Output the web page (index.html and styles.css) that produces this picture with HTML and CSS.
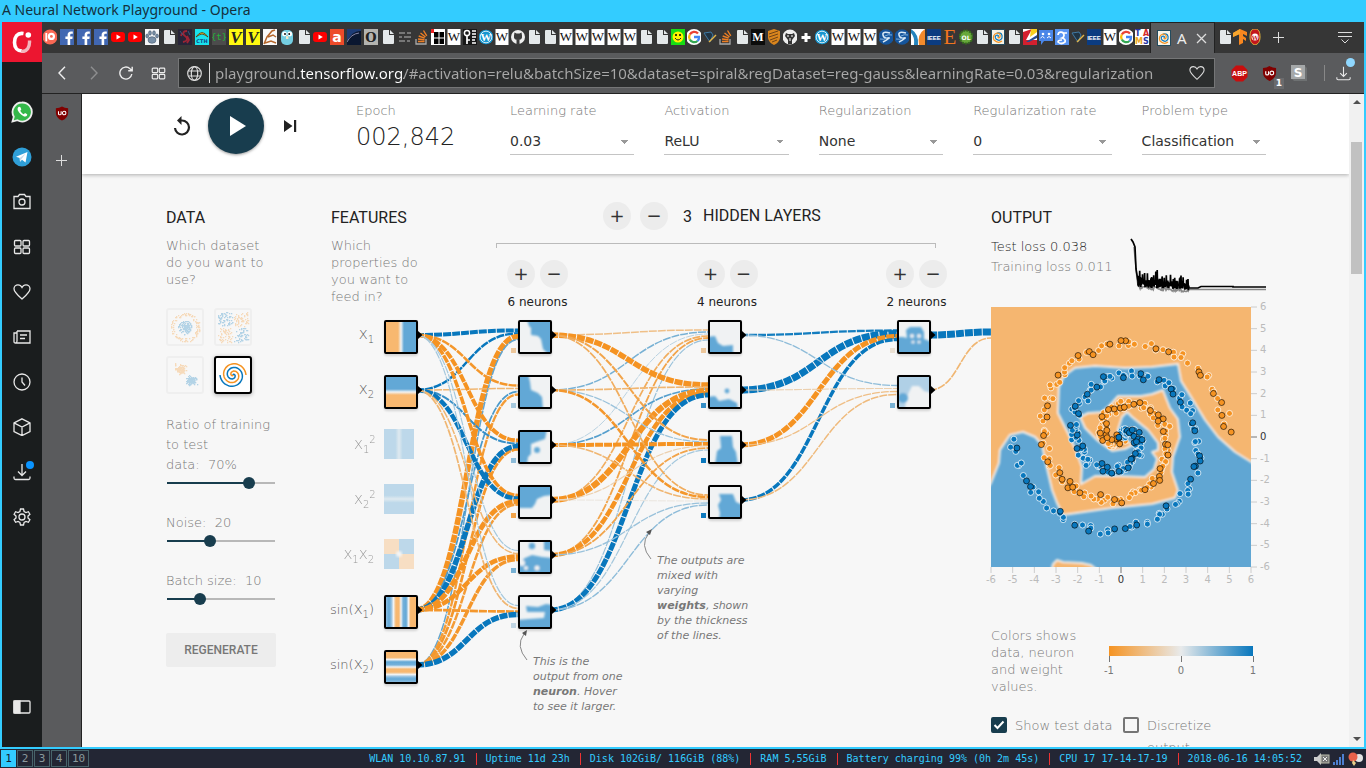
FILE: index.html
```html
<!DOCTYPE html>
<html lang="en">
<head>
<meta charset="utf-8">
<title>A Neural Network Playground</title>
<link rel="stylesheet" href="styles.css">
</head>
<body>
<svg class="defs" aria-hidden="true">
  <defs>
    <symbol id="f-patreon" viewBox="0 0 14 16"><circle cx="7" cy="8" r="7.4" fill="#f96854"/><circle cx="8.4" cy="7.4" r="3.6" fill="#fff"/><circle cx="8.4" cy="7.4" r="1.4" fill="#f96854"/><rect x="2.4" y="4" width="1.8" height="8.4" fill="#fff"/></symbol>
    <symbol id="f-fb" viewBox="0 0 14 16"><rect width="14" height="16" fill="#4167b2"/><path d="M7.6 16V10H5.4V7.6h2.2V6c0-2.2 1.3-3.4 3.4-3.4h1.8v2.2h-1.2c-1 0-1.4.5-1.4 1.4v1.4h2.5L12.400 10h-2.200v6z" fill="#fff"/></symbol>
    <symbol id="f-yt" viewBox="0 0 14 16"><rect y="3" width="14" height="10" rx="3" fill="#f00"/><path d="M5.500 5.600v5L9.800 8z" fill="#fff"/></symbol>
    <symbol id="f-paw" viewBox="0 0 14 16"><rect width="14" height="16" fill="#f4f6f8"/><g fill="#7890a8" stroke="#44586c" stroke-width=".6"><ellipse cx="7" cy="11" rx="4" ry="3.300"/><ellipse cx="2.200" cy="7" rx="1.400" ry="2"/><ellipse cx="5" cy="4" rx="1.400" ry="2.200"/><ellipse cx="9" cy="4" rx="1.400" ry="2.200"/><ellipse cx="12" cy="7" rx="1.400" ry="2"/></g></symbol>
    <symbol id="f-page" viewBox="0 0 14 16"><path d="M3 1h5v5h5v8a1 1 0 0 1-1 1H3a1 1 0 0 1-1-1V2a1 1 0 0 1 1-1z" fill="#e4e8ea"/><path d="M9 1l4 4H9z" fill="#e4e8ea"/></symbol>
    <symbol id="f-snake" viewBox="0 0 14 16"><rect width="14" height="16" fill="#282438"/><path d="M9 2C5 2 4 5 7 7s3 5-2 6M9 7l2 4-2 3M4 4l-1 3" fill="none" stroke="#9c2435" stroke-width="1.800"/><path d="M2 2l3 4M10 2l2 4" stroke="#345b80"/></symbol>
    <symbol id="f-cth" viewBox="0 0 14 16"><rect width="14" height="16" fill="#19e3ee"/><path d="M1 8q6-9 12 0l-3-2-3-1-3 1z" fill="#f4c62c" stroke="#473a14" stroke-width=".8"/><text x="7" y="14" text-anchor="middle" font-family="DejaVu Sans" font-weight="bold" font-size="5" fill="#148">CTH</text></symbol>
    <symbol id="f-t" viewBox="0 0 14 16"><rect width="14" height="16" fill="#4c4c4c"/><text x="7" y="11" text-anchor="middle" font-family="DejaVu Sans Mono" font-size="9" fill="#22b33a">{t}</text></symbol>
    <symbol id="f-v" viewBox="0 0 14 16"><rect width="14" height="16" fill="#fff811"/><text x="7" y="14" text-anchor="middle" font-family="Liberation Serif" font-style="italic" font-weight="bold" font-size="17" fill="#222">V</text></symbol>
    <symbol id="f-swirl" viewBox="0 0 14 16"><rect width="14" height="16" fill="#fafafa"/><path d="M1 15l3-7 5-6 3-1M5 8l5-2 3 2M2 14l6-2 5 2" fill="none" stroke="#b5672c" stroke-width="1.500"/></symbol>
    <symbol id="f-gopher" viewBox="0 0 14 16"><rect x="1" y="1" width="12" height="15" rx="5" fill="#74cee2"/><circle cx="4.400" cy="5" r="2.400" fill="#fff"/><circle cx="9.800" cy="5" r="2.400" fill="#fff"/><circle cx="5" cy="5" r=".9"/><circle cx="9.200" cy="5" r=".9"/><rect x="6" y="7" width="2.400" height="3" fill="#f5e8c8"/></symbol>
    <symbol id="f-a" viewBox="0 0 14 16"><rect width="14" height="16" fill="#ed4b2a"/><text x="7" y="12.500" text-anchor="middle" font-family="DejaVu Sans" font-weight="bold" font-size="14" fill="#fff">a</text></symbol>
    <symbol id="f-night" viewBox="0 0 14 16"><rect width="14" height="16" fill="#0a1730"/><path d="M0 12Q6 1 14 2V0H0z" fill="#1d3c76"/><path d="M0 13q4-8 12-9" fill="none" stroke="#88a" /></symbol>
    <symbol id="f-o" viewBox="0 0 14 16"><rect width="14" height="16" fill="#b4b4b0"/><text x="7" y="13" text-anchor="middle" font-family="DejaVu Serif" font-weight="bold" font-size="13" fill="#222">O</text></symbol>
    <symbol id="f-dash" viewBox="0 0 14 16"><path d="M1 4h6m2 0h4M1 8h3m2 0h7M1 12h6m2 0h3" stroke="#777" stroke-width="2"/></symbol>
    <symbol id="f-so" viewBox="0 0 14 16"><path d="M1 10v5h10v-5" fill="none" stroke="#aaa" stroke-width="1.300"/><path d="M3 12.500h6.500M3 10l6.500.8M3.700 7l6 2.200M5.500 4l5 4M8.500 1.500l3.300 5.300" stroke="#ef7f24" stroke-width="1.400"/></symbol>
    <symbol id="f-grid" viewBox="0 0 14 16"><rect width="14" height="16" fill="#fff"/><rect x="3" y="3" width="10" height="12"/><path d="M8 3v12M3 9h10" stroke="#fff"/><rect width="3" height="4" fill="#e22"/></symbol>
    <symbol id="f-w" viewBox="0 0 14 16"><rect x=".500" width="13" height="16" fill="#fff"/><text x="7" y="12" text-anchor="middle" font-family="Liberation Serif" font-size="13" fill="#111">W</text></symbol>
    <symbol id="f-qr" viewBox="0 0 14 16"><rect width="14" height="16" fill="#171717"/><circle cx="4" cy="4" r="2.600" fill="none" stroke="#fff" stroke-width="1.500"/><path d="M4 7v8M4 11h3M9 2h4M9 5h4M9 8h4M9 11h3M9 14h4" stroke="#fff" stroke-width="1.700"/></symbol>
    <symbol id="f-wp" viewBox="0 0 14 16"><circle cx="7" cy="8" r="7.300" fill="#1795cf"/><circle cx="7" cy="8" r="5.800" fill="none" stroke="#fff" stroke-width=".8"/><text x="7" y="12" text-anchor="middle" font-family="Liberation Serif" font-weight="bold" font-size="11" fill="#fff">W</text></symbol>
    <symbol id="f-gh" viewBox="0 0 14 16"><circle cx="7" cy="8" r="7" fill="#eee"/><path d="M3.500 3.500l2 1h3l2-1 .5 3c.5 3-1 4.500-4 4.500s-4.500-1.500-4-4.500zM5.500 11h3v5h-3z" fill="#3a3a3a"/></symbol>
    <symbol id="f-smile" viewBox="0 0 14 16"><rect width="14" height="16" fill="#17dc14"/><circle cx="7" cy="8" r="5.500" fill="#fff200"/><circle cx="5" cy="6" r="1"/><circle cx="9" cy="6" r="1"/><path d="M4 9q3 4 6 0" fill="none" stroke="#222"/></symbol>
    <symbol id="f-g" viewBox="0 0 14 16"><circle cx="7" cy="8" r="8" fill="#fff"/><g fill="none" stroke-width="2.300"><path d="M11 4.500A5 5 0 0 0 2.800 5.500" stroke="#ea4335"/><path d="M2.800 5.500a5 5 0 0 0 0 5" stroke="#fbbc05"/><path d="M2.800 10.500A5 5 0 0 0 10.500 12" stroke="#34a853"/><path d="M10.500 12a5 5 0 0 0 1.500-4H7" stroke="#4285f4"/></g></symbol>
    <symbol id="f-pen" viewBox="0 0 14 16"><path d="M1 4l7-1 2 3-3 7z" fill="#203444" stroke="#3f79a4"/><path d="M6 13l7-7" stroke="#e1b54b" stroke-width="1.500"/></symbol>
    <symbol id="f-m" viewBox="0 0 14 16"><rect width="14" height="16" fill="#0b0b0b"/><text x="7" y="12" text-anchor="middle" font-family="Liberation Serif" font-weight="bold" font-size="12" fill="#fff">M</text></symbol>
    <symbol id="f-shield" viewBox="0 0 14 16"><path d="M7 0l6 2v7q-1 5-6 7-5-2-6-7V2z" fill="#d9851d"/><path d="M2 5l9-3M2 8l9-3M3 11l8-3M5 13l5-2" stroke="#704316"/></symbol>
    <symbol id="f-cat" viewBox="0 0 14 16"><circle cx="7" cy="8" r="7.500" fill="#eee"/><path d="M3 4l2 1h4l2-1 1 3-3 4v4H5v-4L2 7z" fill="#333"/><path d="M4 7h2M8 7h2M7 9v3" stroke="#fff"/></symbol>
    <symbol id="f-plus" viewBox="0 0 14 16"><path d="M7 4v9M2.500 8.500h9" stroke="#fff" stroke-width="3"/></symbol>
    <symbol id="f-s" viewBox="0 0 14 16"><circle cx="7" cy="8" r="7.800" fill="#15559c"/><path d="M11 4Q3 2 4 6t5 3-5 4" fill="none" stroke="#d7e8f5" stroke-width="1.500"/><path d="M13 6q-4-1-7 1M1 10q4 1 7-1" fill="none" stroke="#7fb0dd"/></symbol>
    <symbol id="f-swoosh" viewBox="0 0 14 16"><rect width="14" height="16" fill="#fff"/><path d="M0 0q8 5 7 16H3Q4 8 0 4z" fill="#2484bd"/><path d="M14 0Q6 5 8 16h6z" fill="#f28a2c"/></symbol>
    <symbol id="f-ieee" viewBox="0 0 14 16"><rect width="14" height="16" fill="#0b3c82"/><text x="7" y="11" text-anchor="middle" font-family="Liberation Sans" font-weight="bold" font-size="6" fill="#fff">IEEE</text></symbol>
    <symbol id="f-e" viewBox="0 0 14 16"><text x="7" y="15" text-anchor="middle" font-family="Liberation Serif" font-size="21" fill="#f2741f">E</text></symbol>
    <symbol id="f-ol" viewBox="0 0 14 16"><circle cx="7" cy="8" r="6.500" fill="#67a83b" stroke="#366a1e" stroke-width="2" stroke-dasharray="2 1"/><text x="7" y="10.500" text-anchor="middle" font-family="DejaVu Sans" font-weight="bold" font-size="6" fill="#fff">OL</text></symbol>
    <symbol id="f-spiral" viewBox="0 0 14 16"><rect x=".5" y=".5" width="13" height="15" fill="#f7f3e8" stroke="#234b5e"/><path d="M7 8q1-2-1-2-3 1-1 4 4 3 6-1 1-6-5-5" fill="none" stroke="#0877bd" stroke-width="1.200"/><path d="M7 8q0 2 2 0 1-4-3-4-5 2-3 7 4 4 8 1" fill="none" stroke="#f59322" stroke-width="1.200"/></symbol>
    <symbol id="f-l" viewBox="0 0 14 16"><rect width="14" height="16" fill="#fff"/><path d="M0 3l9-3L3 11h11v5H0z" fill="#d3202f"/><path d="M8 0h6v3L7 8z" fill="#f8cf1c"/><path d="M3 13l11-7v3L6 13z" fill="#274b94"/></symbol>
    <symbol id="f-chat" viewBox="0 0 14 16"><path d="M0 1h14v11H5l-3 4v-4H0z" fill="#4a86e8"/><circle cx="4" cy="5" r="1.300" fill="#fff"/><circle cx="10" cy="5" r="1.300" fill="#fff"/><path d="M1.500 9q2-3 4 0M8 9q2-3 4 0" stroke="#fff" fill="none"/></symbol>
    <symbol id="f-scholar" viewBox="0 0 14 16"><rect width="14" height="16" fill="#5894f2"/><path d="M3 6a3 3 0 1 1 4 3q4 1 3 4-4 3-7 0 0-2 4-2M8 4h4" fill="none" stroke="#fff" stroke-width="1.700"/></symbol>
    <symbol id="f-tams" viewBox="0 0 14 16"><rect width="14" height="16" fill="#fff"/><g font-family="DejaVu Sans" font-weight="bold" font-size="8"><text x="0" y="7" fill="#2536a4">T</text><text x="8" y="7" fill="#d42828">A</text><text x="0" y="15" fill="#eda821">M</text><text x="8" y="15" fill="#2536a4">S</text></g></symbol>
    <symbol id="f-tf" viewBox="0 0 14 16"><path d="M7 0l7 3v4l-4-2v2l3 2v3l-3-2v4l-4 2V5L0 8V4z" fill="#f9871f"/><path d="M7 0v5L0 8V4z" fill="#f9a62d"/></symbol>
    <symbol id="f-wisc" viewBox="0 0 14 16"><path d="M7 0c4 0 5 3 5 8s-2 7-5 8c-3-1-5-3-5-8s1-8 5-8z" fill="#c4161c" stroke="#e0b53b"/><circle cx="7" cy="8" r="3.500" fill="#fff"/><text x="7" y="10.500" text-anchor="middle" font-family="DejaVu Serif" font-weight="bold" font-size="6" fill="#c4161c">W</text></symbol>
    <symbol id="i-heart" viewBox="0 0 18 18"><path d="M9 16C4 11.500 1 9 1 5.700A4 4 0 0 1 5 1.800c1.800 0 3.200 1 4 2.600.8-1.600 2.200-2.600 4-2.600a4 4 0 0 1 4 3.900C17 9 14 11.500 9 16z"/></symbol>
    <symbol id="i-grid" viewBox="0 0 18 18"><rect x="1.500" y="2.500" width="6.500" height="5.500" rx="1"/><rect x="10" y="2.500" width="6.500" height="5.500" rx="1"/><rect x="1.500" y="10" width="6.500" height="5.500" rx="1"/><rect x="10" y="10" width="6.500" height="5.500" rx="1"/></symbol>
    <symbol id="i-download" viewBox="0 0 18 18"><path d="M9 1v11M5 8.500l4 4 4-4M1 13.500V15q0 1.500 1.500 1.500h13Q17 16.500 17 15v-1.500"/></symbol>
    <symbol id="i-ub" viewBox="0 0 16 16"><path d="M8 0q3 2 7 2v5q0 6-7 9Q1 13 1 7V2q4 0 7-2z" fill="#800000"/><path d="M4 5.500v3q0 1 1.500 1T7 8.500v-3" fill="none" stroke="#fff" stroke-width="1.200"/><circle cx="10.500" cy="7.500" r="2" fill="none" stroke="#fff" stroke-width="1.200"/></symbol>
    <filter id="soft" x="-10%" y="-10%" width="120%" height="120%"><feGaussianBlur stdDeviation="0.9"/></filter>
    <filter id="soft2"><feGaussianBlur stdDeviation="1"/></filter>
  </defs>
</svg>

<header class="titlebar">A Neural Network Playground - Opera</header>

<div class="window">
  <nav class="sidebar" aria-label="Sidebar">
    <button class="opera" aria-label="Menu"><svg width="20" height="22" viewBox="0 0 20 22"><path d="M11.500 2.500C5 1.500 2.500 6 2.500 11.500S5.500 20 10 20" fill="none" stroke="#fff" stroke-width="3.600"/><path d="M9 20.500c6 .5 9-4 8.500-11" fill="none" stroke="#f3b6bd" stroke-width="3.400"/><circle cx="16.300" cy="4" r="2.800" fill="#fff"/></svg></button>
    <div class="side-items">
      <button class="side" aria-label="WhatsApp"><svg width="22" height="22" viewBox="0 0 22 22"><path d="M11 1.500a9.500 9.500 0 0 0-8.200 14.200L1.500 20.500l5-1.300A9.500 9.500 0 1 0 11 1.500z" fill="#34b84a" stroke="#eee" stroke-width="1.800"/><path d="M7.500 6c-2 1.500-.5 4.500 2 7s5.500 3.500 6.500 1.500c.6-1.200.3-1.500-2-2.500l-1.200 1.300c-1.500-.6-3-2-3.500-3.500L10.300 8.500C9.500 6 9 5.500 7.500 6z" fill="#fff"/></svg></button>
      <button class="side" aria-label="Telegram"><svg width="20" height="20" viewBox="0 0 20 20"><circle cx="10" cy="10" r="9.500" fill="#2f9fd8"/><path d="M4 9.700L15.500 5l-2 10.500-3.500-2.700-2 2-.3-3.800z" fill="#fff"/><path d="M7.700 11l6-4.500-4.400 5.700-1.300 2.600z" fill="#c8daea"/></svg></button>
      <button class="side" aria-label="Snapshot"><svg class="line" viewBox="0 0 18 18"><path d="M1 3.500h4l1.500-2h5l1.500 2h4v12H1z"/><circle cx="9" cy="9" r="3"/></svg></button>
      <button class="side" aria-label="Speed dial"><svg class="line"><use href="#i-grid"/></svg></button>
      <button class="side" aria-label="Bookmarks"><svg class="line"><use href="#i-heart"/></svg></button>
      <button class="side" aria-label="News"><svg class="line" viewBox="0 0 18 18"><path d="M4 3h13v12H2.500Q1 15 1 13.500V5h3M4 3v10q0 2-1.500 2M7 7h7M7 10.500h5"/></svg></button>
      <button class="side" aria-label="History"><svg class="line" viewBox="0 0 18 18"><circle cx="9" cy="9" r="8"/><path d="M9 4.500V9l3 3.500"/></svg></button>
      <button class="side" aria-label="Extensions"><svg class="line" viewBox="0 0 18 18"><path d="M9 .8l8 4v8.800l-8 4-8-4V4.800zM1 4.800l8 4.200 8-4.200M9 9v8.500"/></svg></button>
      <button class="side" aria-label="Downloads"><svg class="line"><use href="#i-download"/></svg><i class="dot"></i></button>
      <button class="side" aria-label="Settings"><svg class="line" viewBox="0 0 18 18"><circle cx="9" cy="9" r="3"/><path d="M7.500 1h3l.6 2.500 1.900 1 2.400-.8 1.500 2.600L15 8v2l1.900 1.700-1.500 2.600-2.400-.8-1.900 1-.6 2.500h-3l-.6-2.500-1.900-1-2.400.8-1.500-2.600L3 10V8L1.100 6.300l1.500-2.600 2.400.8 1.900-1z"/></svg></button>
    </div>
    <button class="side panel" aria-label="Toggle panel"><svg class="line" viewBox="0 0 18 18"><rect x="1" y="3" width="16" height="12" rx="1"/><rect x="1" y="3" width="6" height="12" fill="#e8e8e8"/></svg></button>
  </nav>

  <div class="browser">
    <div class="tabs">
      <div class="tab-group first" id="tabs-a"></div>
      <div class="tab-group second" id="tabs-b"></div>
      <div class="active"><svg width="16" height="16"><use href="#f-spiral"/></svg><span>A</span><button aria-label="Close tab"><svg width="11" height="11" viewBox="0 0 11 11"><path d="M1 1l9 9M10 1l-9 9" stroke="#ddd" stroke-width="1.300"/></svg></button></div>
      <div class="tab-group third" id="tabs-c"></div>
      <button class="newtab" aria-label="New tab"><svg width="11" height="11" viewBox="0 0 11 11"><path d="M5.500 0v11M0 5.500h11" stroke="#ddd"/></svg></button>
      <button class="tabmenu" aria-label="Tab menu"><svg width="14" height="13" viewBox="0 0 14 13"><path d="M0 1.500h14M0 5.500h14M3.500 8.500L7 12l3.500-3.500" stroke="#ddd" fill="none"/></svg></button>
    </div>
    <div class="toolbar">
      <button class="nav" aria-label="Back"><svg width="8" height="14" viewBox="0 0 8 14"><path d="M7 .8L1 7l6 6.200"/></svg></button>
      <button class="nav off" aria-label="Forward"><svg width="8" height="14" viewBox="0 0 8 14"><path d="M1 .8L7 7l-6 6.200"/></svg></button>
      <button class="nav" aria-label="Reload"><svg width="14" height="14" viewBox="0 0 14 14"><path d="M12.800 8A6 6 0 1 1 11 2.700L13 4.500M13.200.800v4H9.200"/></svg></button>
      <button class="nav" aria-label="Speed dial"><svg width="15" height="15"><use href="#i-grid"/></svg></button>
      <div class="address">
        <svg width="15" height="15" viewBox="0 0 15 15"><circle cx="7.500" cy="7.500" r="6.800"/><ellipse cx="7.500" cy="7.500" rx="3.200" ry="6.800"/><path d="M1.500 5h12M1.500 10h12"/></svg>
        <i class="caret"></i>
        <input type="text" aria-label="Address" value="playground.tensorflow.org/#activation=relu&amp;batchSize=10&amp;dataset=spiral&amp;regDataset=reg-gauss&amp;learningRate=0.03&amp;regularization">
        <svg width="16" height="16"><use href="#i-heart"/></svg>
      </div>
      <button class="ext" aria-label="Adblock Plus"><svg width="17" height="17" viewBox="0 0 17 17"><path d="M5 .5h7L16.500 5v7L12 16.500H5L.5 12V5z" fill="#c80e0e"/><text x="8.500" y="11" text-anchor="middle" font-family="Liberation Sans" font-weight="bold" font-size="7" fill="#fff">ABP</text></svg></button>
      <button class="ext" aria-label="uBlock Origin"><svg width="15" height="15"><use href="#i-ub"/></svg><b>1</b></button>
      <button class="ext" aria-label="Stylish"><svg width="16" height="16" viewBox="0 0 16 16"><path d="M14 1l2 2v13H3l-2-2z" fill="#6e7172"/><rect width="14" height="14" fill="#a5a8a9"/><text x="7" y="11.500" text-anchor="middle" font-family="DejaVu Sans" font-weight="bold" font-size="12" fill="#fff">S</text></svg></button>
      <i class="sep"></i>
      <button class="ext dl" aria-label="Downloads"><svg class="line" width="15" height="15"><use href="#i-download"/></svg><i class="dot"></i></button>
    </div>

    <div class="below">
      <aside class="rail">
        <button aria-label="uBlock Origin"><svg width="14" height="15"><use href="#i-ub"/></svg></button>
        <button aria-label="Add"><svg width="11" height="11" viewBox="0 0 11 11"><path d="M5.500 0v11M0 5.500h11" stroke="#ddd"/></svg></button>
      </aside>

      <div class="page">
        <div class="controls">
          <div class="controls-inner">
            <div class="timeline">
              <button class="flat" aria-label="Reset"><svg width="20" height="20" viewBox="0 0 20 20"><path d="M3 12a7 7 0 1 0 7-7.500H7.500" fill="none" stroke="#222" stroke-width="2.200"/><path d="M9.500 0v9L5 4.500z" fill="#222"/></svg></button>
              <button class="play" aria-label="Run"><svg width="18" height="22" viewBox="0 0 18 22"><path d="M1 1l16 10L1 21z" fill="#fff"/></svg></button>
              <button class="flat" aria-label="Step"><svg width="14" height="14" viewBox="0 0 14 14"><path d="M1 1l8.500 6L1 13zM11 1h2.200v12H11z" fill="#222"/></svg></button>
            </div>
            <div class="epoch"><span class="label">Epoch</span><output>002,842</output></div>
            <div class="control"><label class="label" for="lr">Learning rate</label><select id="lr"><option>0.03</option></select></div>
            <div class="control"><label class="label" for="act">Activation</label><select id="act"><option>ReLU</option></select></div>
            <div class="control"><label class="label" for="reg">Regularization</label><select id="reg"><option>None</option></select></div>
            <div class="control wide"><label class="label" for="regr">Regularization rate</label><select id="regr"><option>0</option></select></div>
            <div class="control"><label class="label" for="prob">Problem type</label><select id="prob"><option>Classification</option></select></div>
          </div>
        </div>

        <main class="main">
          <section class="data">
            <h2>Data</h2>
            <p class="light">Which dataset do you want to use?</p>
            <div class="datasets" id="datasets"></div>
            <div class="param"><label for="ratio">Ratio of training to test data:&nbsp;&nbsp;70%</label><input type="range" id="ratio" min="10" max="90" value="70" style="--fill:.75"></div>
            <div class="param"><label for="noise">Noise:&nbsp;&nbsp;20</label><input type="range" id="noise" min="0" max="50" value="20" style="--fill:.4"></div>
            <div class="param"><label for="batch">Batch size:&nbsp;&nbsp;10</label><input type="range" id="batch" min="1" max="30" value="10" style="--fill:.31"></div>
            <button class="regen">Regenerate</button>
          </section>

          <section class="network">
            <svg class="graph" id="graph" viewBox="0 0 660 520"></svg>
            <div class="features">
              <h2>Features</h2>
              <p class="light">Which properties do you want to feed in?</p>
            </div>
            <div class="layers">
              <div class="layers-head"><button class="round" aria-label="Add layer">+</button><button class="round" aria-label="Remove layer">−</button><span class="count">3</span><h2>Hidden layers</h2></div>
              <div class="bracket"></div>
              <div class="layer-row">
                <div class="layer"><div><button class="round" aria-label="Add neuron">+</button><button class="round" aria-label="Remove neuron">−</button></div><span>6 neurons</span></div>
                <div class="layer"><div><button class="round" aria-label="Add neuron">+</button><button class="round" aria-label="Remove neuron">−</button></div><span>4 neurons</span></div>
                <div class="layer"><div><button class="round" aria-label="Add neuron">+</button><button class="round" aria-label="Remove neuron">−</button></div><span>2 neurons</span></div>
              </div>
            </div>
            <p class="callout weights">The outputs are mixed with varying <b>weights</b>, shown by the thickness of the lines.</p>
            <p class="callout neuron">This is the output from one <b>neuron</b>. Hover to see it larger.</p>
          </section>

          <section class="output">
            <h2>Output</h2>
            <div class="loss">
              <div><div class="test">Test loss 0.038</div><div class="train">Training loss 0.011</div></div>
              <svg id="losschart" width="136" height="56" viewBox="0 0 136 56"></svg>
            </div>
            <svg class="heat" id="heat" width="274" height="280" viewBox="0 0 274 280"></svg>
            <div class="legend">
              <p class="light">Colors shows data, neuron and weight values.</p>
              <div class="scale"><div class="ramp"></div><div class="marks"><span>-1</span><span>0</span><span>1</span></div></div>
            </div>
            <div class="checks">
              <label><input type="checkbox" checked>Show test data</label>
              <label class="second"><input type="checkbox"><span>Discretize output</span></label>
            </div>
          </section>
        </main>
      </div>

      <div class="scrollbar" aria-hidden="true"><i class="up"></i><i class="thumb"></i><i class="down"></i></div>
    </div>
  </div>
</div>

<footer class="statusbar">
  <div class="spaces"><button class="on">1</button><button>2</button><button>3</button><button>4</button><button>10</button></div>
  <div class="stats"><span>WLAN 10.10.87.91</span><span>Uptime 11d 23h</span><span>Disk 102GiB/ 116GiB (88%)</span><span>RAM 5,55GiB</span><span>Battery charging 99% (0h 2m 45s)</span><span>CPU 17 17-14-17-19</span><span>2018-06-16 14:05:52</span></div>
  <div class="tray">
    <svg width="16" height="14" viewBox="0 0 16 14"><path d="M0 5h3l4-4v12L3 9H0z" fill="#ccc"/><rect x="7" y="3" width="8" height="8" fill="#777" stroke="#bba"/><path d="M9 5l4 4M13 5L9 9" stroke="#eee"/></svg>
    <svg width="12" height="12" viewBox="0 0 12 12"><path d="M1 12V9M4 12V7M7 12V4M10 12V1" stroke="#4d7fd0" stroke-width="2"/></svg>
    <svg width="15" height="14" viewBox="0 0 15 14"><circle cx="11" cy="6" r="4" fill="#e4e4e4"/><circle cx="5" cy="5" r="4.500" fill="#e8614a"/><path d="M5 8l3 3-2 3-2-3z" fill="#e8cf8a"/></svg>
  </div>
</footer>
<script src="app.js"></script>
</body>
</html>
```
FILE: styles.css
```css
* { box-sizing: border-box; }
html, body { height: 100%; }
body {
  margin: 0; display: flex; flex-direction: column; overflow: hidden;
  font-family: "DejaVu Sans", sans-serif; font-size: 13px; color: #222; background: #33ccff;
}
button { border: 0; padding: 0; margin: 0; background: none; font: inherit; color: inherit; display: flex; align-items: center; justify-content: center; }
h2 { margin: 0; font: 400 16px/26px Roboto, sans-serif; text-transform: uppercase; color: #222; }
p { margin: 0; }
.defs { position: absolute; width: 0; height: 0; }

.titlebar { flex: 0 0 22px; padding-left: 2px; font: 14px/20px "Noto Sans", sans-serif; color: #14313e; }
.window { flex: 1; min-height: 0; display: flex; margin: 0 2px 2px; }

.sidebar { flex: 0 0 40px; background: #1a1d1e; display: flex; flex-direction: column; }
.opera { height: 40px; background: #ec1630; }
.side-items { padding-top: 27px; }
.side { position: relative; width: 40px; height: 45px; }
.line { width: 18px; height: 18px; fill: none; stroke: #e8e8e8; stroke-width: 1.300; }
.side .dot { position: absolute; right: 8px; top: 12px; width: 8px; height: 8px; border-radius: 50%; background: #0a94ff; }
.panel { margin: auto 0 18px; }

.browser { flex: 1; min-width: 0; display: flex; flex-direction: column; }
.tabs { flex: 0 0 31px; background: #363636; display: flex; align-items: stretch; }
.tab-group { display: flex; padding-bottom: 1px; }
.tab-group.first { flex: 388 1 0; }
.tab-group.second { flex: 720 1 0; }
.tab-group.third { flex: 0 0 48px; padding-left: 2px; }
.tab-group button { flex: 1 1 0; min-width: 0; }
.tab-group svg { width: 14px; height: 16px; flex: none; }
.active { flex: 0 0 65px; background: #5a5b5d; border: solid #222; border-width: 1px 1px 0; display: flex; align-items: center; gap: 5px; padding-left: 5px; color: #eee; font: 15px "Noto Sans", sans-serif; }
.active button { margin-left: 4px; }
.newtab { width: 30px; }
.tabmenu { width: 38px; margin-left: 33px; }

.toolbar { flex: 0 0 41px; background: #5a5b5d; border-bottom: 1px solid #222; display: flex; align-items: center; padding: 0 6px 0 4px; }
.nav { width: 32px; height: 32px; }
.nav svg { fill: none; stroke: #eee; stroke-width: 1.400; }
.off { opacity: .35; }
.address { flex: 1; min-width: 0; height: 30px; margin: 0 9px 0 4px; background: #2c2e2e; border: 1px solid #757677; display: flex; align-items: center; padding: 0 9px 0 8px; }
.address svg { flex: none; fill: none; stroke: #ddd; stroke-width: 1.200; }
.caret { width: 1px; height: 20px; background: #ddd; margin: 0 5px 0 7px; }
.address input {
  flex: 1; min-width: 0; border: 0; padding: 0; outline: 0; font: 15px "Noto Sans", sans-serif; color: transparent;
  background: linear-gradient(90deg, #a8a8a8 83px, #fff 83px, #fff 189px, #a8a8a8 189px);
  -webkit-background-clip: text; background-clip: text;
}
.ext { position: relative; width: 30px; height: 30px; }
.ext b { position: absolute; right: 0; bottom: -1px; width: 10px; height: 11px; background: #6a6b6d; color: #fff; font: bold 9px/11px "DejaVu Sans", sans-serif; }
.sep { width: 1px; height: 16px; background: #888; margin: 0 0 0 10px; }
.dl { margin-left: 3px; }
.dl .line { width: 15px; height: 15px; }
.dl .dot { position: absolute; right: 3px; top: 0; width: 9px; height: 9px; border-radius: 50%; background: #90d8ff; }

.below { flex: 1; min-height: 0; display: flex; }
.rail { flex: 0 0 40px; background: #5a5b5d; border-right: 1px solid #222; display: flex; flex-direction: column; gap: 9px; }
.rail button { height: 38px; }
.page { flex: 1; min-width: 0; overflow: hidden; background: #f7f7f7; }
.scrollbar { flex: 0 0 15px; background: #f1f1f1; display: flex; flex-direction: column; align-items: center; padding: 6px 0; }
.thumb { width: 11px; height: 132px; margin-top: 38px; background: #c1c1c1; }
.up, .down { border: 4px solid transparent; }
.up { border-top-width: 0; border-bottom-color: #505050; }
.down { border-bottom-width: 0; border-top-color: #505050; margin-top: auto; }

.controls { height: 80px; background: #fff; box-shadow: 0 1px 4px rgba(0, 0, 0, .3); position: relative; }
.controls-inner, .main { max-width: 1101px; margin: 0 auto; padding-left: 1px; }
.controls-inner { display: flex; align-items: flex-start; gap: 30px; padding-top: 8px; }
.timeline { flex: 0 0 160px; height: 48px; display: flex; align-items: center; gap: 18px; padding-left: 8px; }
.flat { width: 16px; height: 24px; }
.flat svg { flex: none; }
.play { width: 56px; height: 56px; border-radius: 50%; background: #183d4e; box-shadow: 0 1px 3px rgba(0, 0, 0, .4); padding-left: 3px; }
.label { display: block; font-weight: 200; line-height: 17px; color: #777; white-space: nowrap; }
.epoch { flex: 0 0 124px; }
.epoch output { display: block; font-size: 24px; font-weight: 200; line-height: 36px; color: #222; }
.control { flex: 124 1 0; min-width: 0; }
.wide { flex-grow: 138; }
.control select {
  appearance: none; width: 100%; height: 27px; margin-top: 9px; border: 0; border-bottom: 1px solid #c4c4c4; border-radius: 0; padding: 0; outline: 0;
  font: 14px "DejaVu Sans", sans-serif; color: #333;
  background: linear-gradient(to bottom right, #999 50%, transparent 50%) right 5px top 12px / 4px 4px no-repeat, linear-gradient(to bottom left, #999 50%, transparent 50%) right 9px top 12px / 4px 4px no-repeat;
}

.main { display: grid; grid-template-columns: 110px minmax(0, 1fr) 275px; padding-top: 31px; }
.light { font-weight: 200; line-height: 17px; color: #777; margin-top: 6px; }
.datasets { display: grid; grid-template-columns: 38px 38px; gap: 10px; margin: 20px 0 21px; }
.datasets button { width: 38px; height: 38px; border: 2px solid #ddd; border-radius: 3px; opacity: .28; }
.datasets .picked { border-color: #000; background: #fff; opacity: 1; box-shadow: 0 1px 4px rgba(0, 0, 0, .3); }
.param { margin-bottom: 22px; }
.param label { display: block; font-weight: 200; line-height: 20px; color: #777; }
.param input { appearance: none; display: block; width: calc(100% + 12px); height: 16px; margin: 0 -6px; background: none; }
.param input::-webkit-slider-runnable-track {
  height: 2px;
  background: linear-gradient(90deg, transparent 7px, #183d4e 7px, #183d4e calc(6px + (100% - 12px) * var(--fill)), #b8b8b8 calc(6px + (100% - 12px) * var(--fill)), #b8b8b8 calc(100% - 7px), transparent calc(100% - 7px));
}
.param input::-webkit-slider-thumb { appearance: none; width: 12px; height: 12px; margin-top: -5px; border-radius: 50%; background: #183d4e; }
.regen { width: 100%; height: 34px; margin-top: 26px; background: #ededed; border-radius: 2px; font: 500 12px Roboto, sans-serif; text-transform: uppercase; color: #777; }

.network { position: relative; margin-left: 55px; display: flex; align-items: flex-start; }
.graph { position: absolute; left: 0; top: 0; width: 100%; overflow: visible; }
.features { position: relative; flex: 0 0 100px; }
.layers { position: relative; flex: 0 0 451px; margin-left: 65px; }
.layers-head { display: flex; align-items: center; height: 22px; padding-left: 107px; }
.layers-head .round + .round { margin-left: 9px; }
.count { font: 16px Roboto, sans-serif; margin: 0 11px 0 15px; }
.round { width: 28px; height: 28px; border-radius: 50%; background: #ececec; color: #333; font: 18px/28px "DejaVu Sans", sans-serif; }
.bracket { height: 5px; border: 1px solid #bbb; border-bottom: 0; margin: 16px 11px 0 0; }
.layer-row { display: flex; justify-content: space-between; margin: 12px 0 0 11px; }
.layer { width: 61px; text-align: center; }
.layer div { display: flex; justify-content: space-between; }
.layer span { display: block; margin-top: 6px; font-size: 12px; line-height: 17px; white-space: nowrap; }
.callout { position: absolute; width: 95px; font: italic 11px/15px "DejaVu Sans", sans-serif; color: #777; }
.weights { left: 326px; top: 348px; }
.neuron { left: 202px; top: 449px; }
.graph text { font: 200 13px "DejaVu Sans", sans-serif; fill: #555; }
.graph .idle { opacity: .6; }
.graph .small { font-size: 10px; }

.loss { display: flex; justify-content: space-between; margin-top: 6px; height: 70px; font-weight: 200; line-height: 20px; white-space: nowrap; }
.test { color: #222; }
.train { color: #777; }
.heat { display: block; overflow: visible; }
.heat text { font: 10px "DejaVu Sans", sans-serif; fill: #bbb; }
.heat .zero { fill: #333; }
.legend { display: flex; margin-top: 40px; }
.legend .light { margin: 0; flex: 0 0 118px; padding-right: 24px; }
.scale { flex: 0 0 144px; padding-top: 19px; }
.ramp { height: 10px; background: linear-gradient(90deg, #f59322, #e8eaeb 50%, #0877bd); }
.marks { display: flex; justify-content: space-between; margin: 0 -10px; }
.marks span { width: 20px; text-align: center; font-size: 10px; line-height: 18px; color: #777; }
.marks span::before { content: ""; display: block; width: 1px; height: 6px; margin: 0 auto; background: #777; }
.checks { display: flex; margin-top: 20px; font-weight: 200; line-height: 22px; color: #777; }
.checks label { display: flex; align-items: flex-start; flex: 0 0 132px; white-space: nowrap; }
.checks .second { flex-basis: 120px; white-space: normal; }
.checks input { appearance: none; flex: none; width: 16px; height: 16px; margin: 2px 8px 0 0; border: 2px solid #757575; border-radius: 2px; }
.checks input:checked {
  border-color: #183d4e;
  background: #183d4e url("data:image/svg+xml,%3Csvg xmlns='http://www.w3.org/2000/svg' viewBox='0 0 12 12'%3E%3Cpath d='M1.500 6l3 3 6-6.500' fill='none' stroke='white' stroke-width='2'/%3E%3C/svg%3E") center / 12px no-repeat;
}

.statusbar { flex: 0 0 19px; background: #232634; display: flex; align-items: center; font: 10px/12px "DejaVu Sans Mono", monospace; color: #33ccff; }
.spaces { display: flex; gap: 1px; padding-left: 1px; }
.spaces button { height: 17px; min-width: 16px; padding: 0 3px; border: 1px solid #47636a; color: #8a999c; font-size: 11px; }
.spaces .on { min-width: 15px; background: #33ccff; border-color: #33ccff; color: #123; }
.stats { display: flex; margin-left: auto; white-space: pre; }
.stats span + span { border-left: 1px solid #e33; margin-left: 10px; padding-left: 9px; }
.tray { display: flex; align-items: center; gap: 3px; padding: 0 3px 0 12px; }
```
FILE: app.js
```js
const NS = 'http://www.w3.org/2000/svg';
const BLUE = '#0877bd', ORANGE = '#f59322';

let seed = 20180616;
function rnd() { seed = (seed * 1664525 + 1013904223) % 4294967296; return seed / 4294967296; }
function jitter(a) { return (rnd() * 2 - 1) * a; }

/* ---------- tab favicons ---------- */
const tabs = {
  'tabs-a': 'patreon fb fb fb yt yt paw page snake cth t v v swirl gopher page yt a night o page dash so',
  'tabs-b': 'grid w qr wp w gh page page w w w w w page page smile g pen so page m shield cat plus wp w w w s s swoosh ieee e ol page spiral page l chat scholar pen ieee w g tams',
  'tabs-c': 'page tf wisc'
};
for (const id in tabs) {
  document.getElementById(id).innerHTML = tabs[id].split(' ')
    .map(n => `<button aria-label="Tab ${n}"><svg><use href="#f-${n}"/></svg></button>`).join('');
}

/* ---------- dataset thumbnails ---------- */
function dots(gen) {
  let s = '';
  for (let i = 0; i < 240; i++) {
    const [x, y, c] = gen(i);
    s += `<rect x="${Math.round(x)}" y="${Math.round(y)}" width="1.300" height="1.300" fill="${c}"/>`;
  }
  return s;
}
function gauss() { return (rnd() + rnd() + rnd() - 1.5) * 2; }
const circle = dots(i => {
  const t = rnd() * 6.283, blue = i % 2, r = blue ? rnd() * 7 : 11 + rnd() * 3.500;
  return [17 + r * Math.sin(t), 17 + r * Math.cos(t), blue ? BLUE : ORANGE];
});
const xor = dots(() => {
  const x = jitter(14), y = jitter(14);
  return [17 + x + Math.sign(x), 17 + y + Math.sign(y), x * y > 0 ? BLUE : ORANGE];
});
const blobs = dots(i => i % 2
  ? [23 + gauss() * 2.500, 22 + gauss() * 2, BLUE]
  : [12 + gauss() * 2.500, 11 + gauss() * 2, ORANGE]);
function arm(phase) {
  let d = '';
  for (let i = 0; i <= 80; i++) {
    const r = i / 80 * 13, t = 1.75 * i / 80 * 6.283 + phase;
    d += (i ? 'L' : 'M') + (17 + r * Math.sin(t)).toFixed(1) + ' ' + (17 - r * Math.cos(t)).toFixed(1);
  }
  return d;
}
const spiral = `<g fill="none" stroke-width="1.500"><path d="${arm(0)}" stroke="${BLUE}"/><path d="${arm(Math.PI)}" stroke="${ORANGE}"/></g>`;
document.getElementById('datasets').innerHTML = [['Circle', circle], ['Exclusive or', xor], ['Gaussian', blobs], ['Spiral', spiral]]
  .map(([n, s], i) => `<button aria-label="${n}"${i === 3 ? ' class="picked"' : ''}><svg width="34" height="34" viewBox="0 0 34 34">${s}</svg></button>`).join('');

/* ---------- network ---------- */
const BOX = 30, TOP = 115, STEP = 55;
const COLS = [53, 187, 377, 566];
const cy = row => TOP + 15 + row * STEP;

/* One row per target neuron: [strength, width] for each input, negative = orange. */
const featureRows = [0, 1, 5, 6];
const layer1 = [
  [[1, 4], [1, 2.5], [-1, 5.5], [.6, 1.5]],
  [[-.95, 2.5], [-.6, 1.5], [.7, 1.7], [-.9, 2.3]],
  [[-1, 4], [.8, 2], [1, 5.5], [-.95, 2.7]],
  [[-1, 3.5], [1, 4.5], [-1, 5], [-.9, 2.5]],
  [[.3, 1.2], [-.6, 1.5], [-1, 4.5], [-.95, 3.5]],
  [[.3, 1.2], [-.6, 1.7], [-.95, 2.7], [1, 5.5]]
];
const layer2 = [
  [[-.5, 1.5], [.5, 1.5], [.2, 1], [-.7, 1.7], [-.8, 1.8], [.35, 1.2]],
  [[-1, 5.5], [-.6, 1.6], [.65, 1.7], [-1, 6], [-1, 4.5], [1, 5]],
  [[-.8, 2], [.35, 1.2], [-1, 4], [-.3, 1.2], [-.8, 1.8], [.3, 1.2]],
  [[-.7, 1.7], [-.95, 2.5], [-.6, 1.6], [-.08, .9], [.35, 1.3], [.4, 1.4]]
];
const layer3 = [
  [[.95, 2.3], [1, 7], [-1, 5], [1, 3.5]],
  [[.4, 1.3], [-.3, 1.1], [-.5, 1.3], [-.55, 1.5]]
];
const outLayer = [[[1, 7], [-.6, 1.6]]];

function mix(v) {
  const base = [232, 234, 235], end = v > 0 ? [8, 119, 189] : [245, 147, 34], k = Math.abs(v);
  return `rgb(${base.map((b, i) => Math.round(b + (end[i] - b) * k)).join()})`;
}
function links(weights, rows, x0, x1) {
  let s = '';
  weights.forEach((ins, t) => ins.forEach(([v, w], i) => {
    const sx = x0 + BOX + 2, sy = cy(rows[i]), ty = cy(t) + (i - (ins.length - 1) / 2) / ins.length * 12, mx = (sx + x1) / 2;
    s += `<path d="M${sx} ${sy}C${mx} ${sy} ${mx} ${ty} ${x1} ${ty}" fill="none" stroke="${mix(v)}" stroke-width="${w}" stroke-dasharray="8 1"/>`;
  }));
  return s;
}

const B = '#62a8d6', O = '#f8b870', W = '#f0f2f3';
const poly = (p, c = B) => `<polygon points="${p}" fill="${c}"/>`;
const spot = (x, y, r, c = B) => `<circle cx="${x}" cy="${y}" r="${r}" fill="${c}"/>`;
const art = [
  [
    poly('7,-3 9,4 11,6 11,13 18,14 21,17 23,27 27,31 33,33 33,-3'),
    poly('-3,-3 8,-3 10,5 11,13 18,16 22,20 23,33 -3,33'),
    poly('-3,-3 27,-3 25,7 16,10 11,12 11,22 8,25 7,33 -3,33') + spot(17, 18, 3),
    poly('-3,-3 33,-3 33,8 24,9 17,12 15,17 12,21 -3,21'),
    spot(12, 4, 3.200) + poly('24,-3 33,-3 33,9 24,8') + poly('5,16 12,13 22,15 33,16 33,33 -3,33 -3,22') + spot(2, 21, 3, W) + spot(6, 26, 2, W) + spot(17, 26, 2.500, W),
    poly('6,9 18,10 26,7 33,8 33,33 -3,33 -3,23 9,22 24,21 25,15 7,15')
  ],
  [
    poly('-3,15 5,14 8,21 13,24 23,23 23,33 -3,33'),
    poly('-3,20 5,19 9,24 19,22 27,26 28,33 -3,33') + spot(17, 14, 2.400),
    poly('10,4 22,4 23,15 26,20 28,33 5,33 7,19 11,16'),
    poly('9,7 23,7 26,15 33,18 33,33 9,33 10,26 8,18 11,13')
  ],
  [
    poly('-3,15 4,15 8,16 7,8 11,5 22,5 25,10 25,17 33,20 33,33 -3,33') + spot(13, 14, 2, W) + spot(20, 14, 2, W) + spot(14, 20, 1.600, W) + spot(20, 20, 1.600, W),
    poly('-3,-3 33,-3 33,16 25,14 20,9 13,9 10,15 7,22 6,33 -3,33', '#b0d0e6') + spot(4, 21, 5)
  ]
];
const frame = (x, row, inner) => {
  const y = TOP + row * STEP;
  return `<g transform="translate(${x} ${y})"><rect y="1" width="34" height="35" rx="3" fill="#000" opacity=".14" filter="url(#soft2)"/>
    <rect width="34" height="34" rx="2" fill="#000"/><svg x="2" y="2" width="30" height="30" viewBox="0 0 30 30">${inner}</svg>
    <path d="M34 11v8l4.500-4z" fill="#000"/></g>`;
};
const neuron = (x, row, inner) => frame(x, row, `<rect width="30" height="30" fill="${W}"/><g filter="url(#soft)">${inner}</g>`);
let bandCount = 0;
function bands(stops, vertical) {
  const id = 'band' + (++bandCount);
  return `<linearGradient id="${id}" x2="${vertical ? 0 : 1}" y2="${vertical ? 1 : 0}">${stops.map(([o, c]) => `<stop offset="${o}" stop-color="${c}"/>`).join('')}</linearGradient><rect width="30" height="30" fill="url(#${id})"/>`;
}
function plain(x, row, inner) {
  return `<svg x="${x}" y="${TOP + row * STEP - 1}" width="30" height="30" viewBox="0 0 30 30" opacity=".38">${inner}</svg>`;
}
const sine = [[0, '#8abbdf'], [.1, B], [.17, '#8abbdf'], [.25, W], [.33, O], [.43, O], [.5, W], [.57, '#75b1da'], [.67, B], [.75, W], [.82, O], [1, O]];
const sineDown = sine.map(([o, c]) => [1 - o, c]).reverse();

const bias = [[-.4, .3, .4, -.8, .5, .18], [-.4, .8, .98, .98], [-.12, .5]];
let g = links(layer1, featureRows, COLS[0], COLS[1]) + links(layer2, [0, 1, 2, 3, 4, 5], COLS[1], COLS[2])
  + links(layer3, [0, 1, 2, 3], COLS[2], COLS[3]) + links(outLayer, [0, 1], COLS[3], 660);

g += frame(53, 0, bands([[0, O], [.4, O], [.5, W], [.6, B], [1, B]]));
g += frame(53, 1, bands([[0, B], [.4, B], [.5, W], [.6, O], [1, O]], true));
g += plain(53, 2, bands([[0, B], [.38, B], [.5, '#b9d5e5'], [.62, B], [1, B]]));
g += plain(53, 3, bands([[0, B], [.38, B], [.5, '#b9d5e5'], [.62, B], [1, B]], true));
g += plain(53, 4, `<rect width="30" height="30" fill="${B}"/><path d="M0 0h15v15H0zM15 15h15v15H15z" fill="${O}"/><circle cx="15" cy="15" r="3" fill="${W}" filter="url(#soft)"/>`);
g += frame(53, 5, bands(sine));
g += frame(53, 6, bands(sineDown, true));
art.forEach((layer, l) => layer.forEach((a, r) => {
  g += neuron(COLS[l + 1], r, a);
  g += `<rect x="${COLS[l + 1] - 7}" y="${TOP + r * STEP + 28}" width="5" height="5" fill="${mix(bias[l][r])}"/>`;
}));

const sub = (n, after = '') => `<tspan class="small" dy="4">${n}</tspan>${after ? `<tspan dy="-4">${after}</tspan>` : ''}`;
const names = ['X' + sub(1), 'X' + sub(2), null, null, 'X' + sub(1, 'X') + sub(2), 'sin(X' + sub(1, ')'), 'sin(X' + sub(2, ')')];
names.forEach((n, i) => {
  const y = cy(i) + 4, idle = i > 1 && i < 5 ? ' class="idle"' : '';
  if (n) g += `<text x="43" y="${y}" text-anchor="end"${idle}>${n}</text>`;
  else g += `<text x="23" y="${y}"${idle}>X<tspan class="small" dy="4">${i - 1}</tspan><tspan class="small" dy="-10">2</tspan></text>`;
});
g += `<g fill="none" stroke="#888"><path d="M196 455q-12-14-3-26M320 354q-12-14-2-26"/></g><path d="M196 425l-1 6-4-3zM321 324l-2 6-4-3z" fill="#555"/>`;
document.getElementById('graph').innerHTML = g;

/* ---------- loss curve ---------- */
let test = 'M1 0L3 3L5 8L6 30L8 42', train = 'M4 8L7 40';
for (let x = 8; x < 59; x += .7) {
  const low = 44 + (x - 8) * .07;
  test += `L${x.toFixed(1)} ${(low + rnd() * 4).toFixed(1)}L${(x + .3).toFixed(1)} ${(low - 1 - rnd() * rnd() * 16).toFixed(1)}`;
  train += `L${x.toFixed(1)} ${(low + 2 + rnd() * 4).toFixed(1)}`;
}
test += 'L59 49H68L71 47.500H103V48H136';
train += 'L59 50.500H136';
document.getElementById('losschart').innerHTML = `<g fill="none"><path d="${train}" stroke="#888" stroke-width="1.500"/><path d="${test}" stroke="#000" stroke-width="1.700"/></g>`.replace(/<g /, '<g transform="translate(0 2)" ');

/* ---------- output heat map ---------- */
const SIZE = 260, UNIT = SIZE / 12;
const orangeArea = '-9,-9 269,-9 269,160 260,155 244,145 227,130 214,113 200,90 190,74 187,57 161,60 134,61 104,59 84,61 73,69 68,80 67,106 79,130 86,146 91,160 90,177 104,169 127,169 154,170 163,162 166,152 161,145 167,143 167,136 157,123 141,110 136,105 131,110 127,123 133,134 144,137 134,142 121,144 107,134 94,121 89,110 97,106 111,105 119,98 127,89 150,89 161,87 172,83 179,101 187,112 189,130 182,150 181,165 187,183 184,191 161,197 121,201 72,208 66,196 61,183 54,153 51,138 44,130 32,125 19,128 9,143 8,156 0,176 -9,190';
function points(phase, color) {
  let a = '', b = '';
  for (let i = 0; i < 225; i++) {
    const k = (i + rnd()) / 225, r = k * 5, t = 1.75 * k * 2 * Math.PI + phase;
    const x = 130 + (r * Math.sin(t) + jitter(.2)) * UNIT, y = 130 - (r * Math.cos(t) + jitter(.2)) * UNIT;
    const held = rnd() < .3;
    const c = `<circle cx="${x.toFixed(1)}" cy="${y.toFixed(1)}" r="3" fill="${color}" stroke="${held ? '#000' : '#fff'}" stroke-opacity="${held ? .6 : .75}"/>`;
    if (held) b += c; else a += c;
  }
  return [a, b];
}
const pb = points(0, BLUE), po = points(Math.PI, ORANGE);
let h = `<svg width="${SIZE}" height="${SIZE}" viewBox="0 0 260 260"><rect width="260" height="260" fill="#60a6d3"/>
  <g filter="url(#soft)" fill="#f5b670" stroke="#f0ece6" stroke-width="2" stroke-linejoin="round"><polygon points="${orangeArea}"/><path d="M60 265L62 257 66 253 72 255 91 256 100 258 109 265z"/></g></svg>
  ${po[0]}${pb[0]}${po[1]}${pb[1]}`;
for (let v = -6; v <= 6; v++) {
  const p = 130 + v * UNIT, q = 130 - v * UNIT, z = v === 0;
  h += `<path d="M${p} 260v6M260 ${q}h6" stroke="${z ? '#777' : '#ccc'}"/>
    <text x="${p}" y="276" text-anchor="middle"${z ? ' class="zero"' : ''}>${v}</text>
    <text x="269" y="${q + 3}"${z ? ' class="zero"' : ''}>${v}</text>`;
}
document.getElementById('heat').innerHTML = h;
```
